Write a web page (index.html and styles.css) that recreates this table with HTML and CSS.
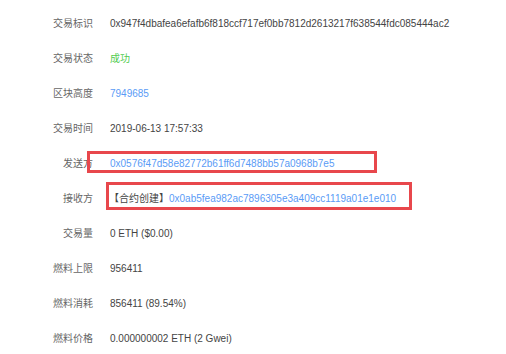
FILE: index.html
```html
<!DOCTYPE html>
<html lang="en">
<head>
    <meta charset="UTF-8">
    <title>交易详情</title>
    <link rel="stylesheet" href="styles.css">
</head>
<body>
<div class="detail">
    <div class="row">
        <div class="label">交易标识</div>
        <div class="value">0x947f4dbafea6efafb6f818ccf717ef0bb7812d2613217f638544fdc085444ac2</div>
    </div>
    <div class="row">
        <div class="label">交易状态</div>
        <div class="value success">成功</div>
    </div>
    <div class="row">
        <div class="label">区块高度</div>
        <div class="value"><a class="link">7949685</a></div>
    </div>
    <div class="row">
        <div class="label">交易时间</div>
        <div class="value">2019-06-13 17:57:33</div>
    </div>
    <div class="row">
        <div class="label">发送方</div>
        <div class="value"><a class="link">0x0576f47d58e82772b61ff6d7488bb57a0968b7e5</a></div>
    </div>
    <div class="row">
        <div class="label">接收方</div>
        <div class="value"><span class="tag">【合约创建】</span><a class="link">0x0ab5fea982ac7896305e3a409cc1119a01e1e010</a></div>
    </div>
    <div class="row">
        <div class="label">交易量</div>
        <div class="value">0 ETH ($0.00)</div>
    </div>
    <div class="row">
        <div class="label">燃料上限</div>
        <div class="value">956411</div>
    </div>
    <div class="row">
        <div class="label">燃料消耗</div>
        <div class="value">856411 (89.54%)</div>
    </div>
    <div class="row">
        <div class="label">燃料价格</div>
        <div class="value">0.000000002 ETH (2 Gwei)</div>
    </div>

    <!-- пометки поверх скриншота -->
    <div class="mark mark-from"></div>
    <div class="mark mark-to"></div>
</div>
</body>
</html>
```

FILE: styles.css
```css
* {
    box-sizing: border-box;
}

body {
    margin: 0;
    background: #fff;
    font-family: "Liberation Sans", Arial, "Noto Sans CJK SC", sans-serif;
    font-size: 10px;
}

.detail {
    position: relative;
    padding-top: 6px;
}

.row {
    display: flex;
    height: 35px;
    line-height: 35px;
}

.row .label {
    width: 93px;
    text-align: right;
    color: #666;
}

.row .value {
    margin-left: 17px;
    color: #444;
    white-space: nowrap;
}

.row .success {
    color: #52cc4f;
}

.row .link {
    color: #5a9bf6;
    text-decoration: none;
}

.row .tag {
    color: #444;
    margin-left: -1px;
}

.mark {
    position: absolute;
    border: 3px solid #e8474c;
}

.mark-from {
    left: 87px;
    top: 151px;
    width: 290px;
    height: 22px;
}

.mark-to {
    left: 106px;
    top: 182px;
    width: 306px;
    height: 28px;
}
```
